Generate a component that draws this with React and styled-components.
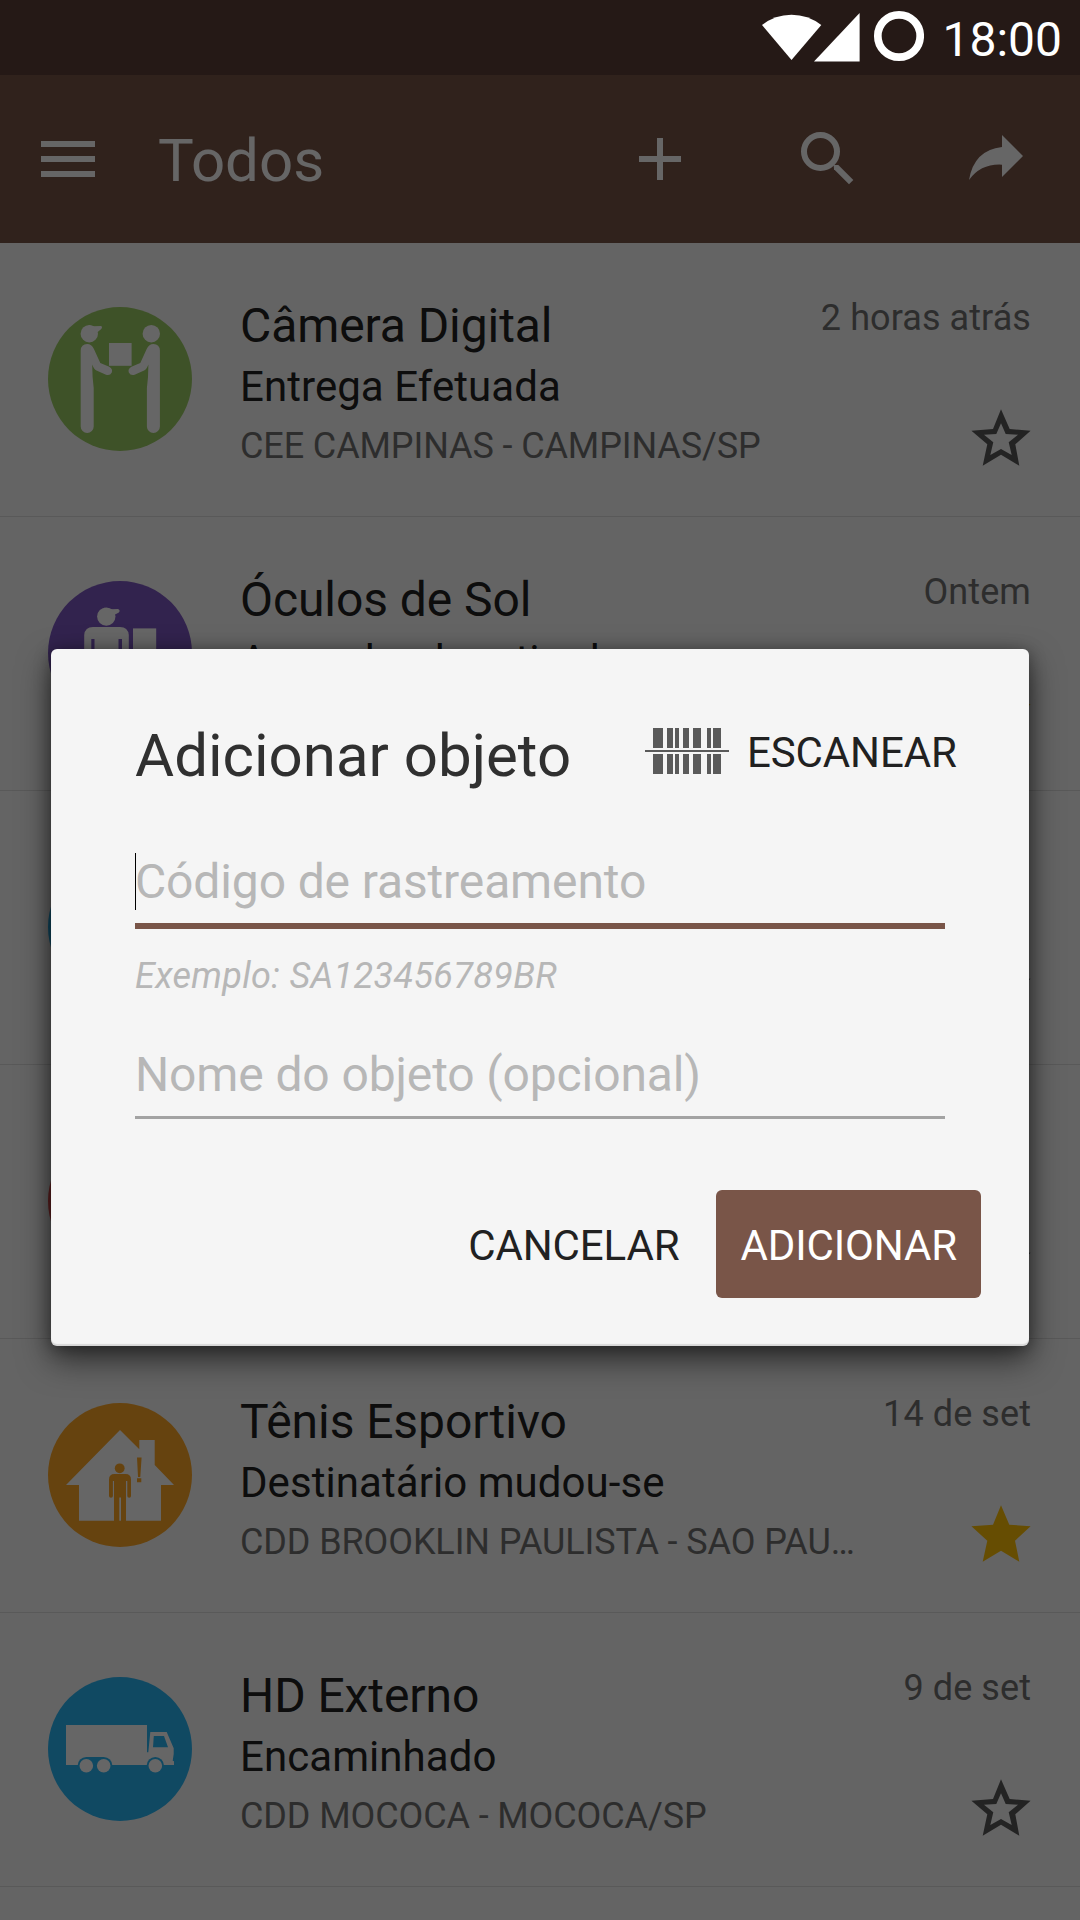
import React from "react";
import styled, { createGlobalStyle } from "styled-components";

const GlobalStyle = createGlobalStyle`
  *, *::before, *::after { box-sizing: border-box; }
  html, body { margin: 0; padding: 0; }
  body { font-family: Roboto, "Noto Sans", sans-serif; background: #fafafa; }
  button, input { font-family: inherit; margin: 0; border: 0; background: none; }
`;

const Screen = styled.div`
  position: relative;
  display: flex;
  flex-direction: column;
  width: 1080px;
  height: 1920px;
  overflow: hidden;
  background: #fafafa;
`;

const StatusBar = styled.header`
  display: flex;
  flex: none;
  justify-content: flex-end;
  height: 75px;
  padding-right: 18px;
  background: #5d4037;
`;

const StatusItems = styled.div`
  position: relative;
  z-index: 2;
  display: flex;
  align-items: flex-start;
  color: #fff;
`;

const StatusGlyph = styled.svg`
  width: 164px;
  height: 75px;
  margin-right: 18px;
`;

const Clock = styled.span`
  padding-top: 11px;
  font-size: 48px;
  line-height: 57px;
`;

const Toolbar = styled.nav`
  display: flex;
  flex: none;
  align-items: center;
  height: 168px;
  padding: 0 48px 0 32px;
  background: #795548;
  color: #fff;
`;

const ToolbarIcon = styled.svg`
  flex: none;
  width: 72px;
  height: 72px;
  margin-left: ${(p) => p.$gap || 0}px;
`;

const ToolbarTitle = styled.h1`
  flex: 1;
  margin: 0 0 0 54px;
  padding-top: 4px;
  font-size: 60px;
  font-weight: 400;
  line-height: 70px;
`;

const List = styled.ul`
  margin: 0;
  padding: 0;
  list-style: none;
`;

const Row = styled.li`
  display: flex;
  height: 274px;
  padding: 0 48px;
  border-bottom: 1px solid #dedede;
`;

const Avatar = styled.svg`
  flex: none;
  width: 144px;
  height: 144px;
  margin: 64px 48px 0 0;
  border-radius: 50%;
  background: ${(p) => p.$color};
  color: #fff;
`;

const Details = styled.div`
  flex: 1;
  min-width: 0;
  padding-top: 55px;
  white-space: nowrap;
  color: #212121;
`;

const ItemName = styled.div`
  font-size: 48px;
  letter-spacing: -0.08px;
  line-height: 56px;
`;

const ItemStatus = styled.div`
  margin-top: 8px;
  font-size: 42px;
  letter-spacing: 0.06px;
  line-height: 50px;
`;

const ItemPlace = styled.div`
  margin-top: 13px;
  font-size: 36px;
  letter-spacing: -0.11px;
  line-height: 42px;
  color: #727272;
`;

const Side = styled.div`
  display: flex;
  flex: none;
  flex-direction: column;
  align-items: flex-end;
  padding-top: 54px;
  font-size: 36px;
  line-height: 42px;
  color: #727272;
`;

const When = styled.span`
  margin-right: 1px;
  letter-spacing: 0.08px;
`;

const Star = styled.svg`
  width: 60px;
  height: 60px;
  margin: 69px 1px 0 0;
`;

const Scrim = styled.div`
  position: absolute;
  inset: 0;
  z-index: 1;
  display: flex;
  align-items: center;
  justify-content: center;
  padding-top: 75px;
  background: rgba(0, 0, 0, 0.6);
`;

const Dialog = styled.section`
  display: flex;
  flex-direction: column;
  width: 978px;
  height: 697px;
  padding: 71px 48px 48px 84px;
  border-radius: 6px;
  background: #f5f5f5;
  box-shadow: 0 14px 32px rgba(0, 0, 0, 0.55), 0 2px 16px rgba(0, 0, 0, 0.35),
    inset 0 -2px 1px rgba(0, 0, 0, 0.12);
  color: #212121;
`;

const DialogHeader = styled.div`
  display: flex;
  height: 70px;
  align-items: center;
`;

const DialogTitle = styled.h2`
  width: 510px;
  margin: 0;
  padding-top: 2px;
  font-size: 60px;
  font-weight: 400;
  line-height: 70px;
  color: #303030;
  white-space: nowrap;
`;

const ScanButton = styled.button`
  display: flex;
  align-items: center;
  margin-bottom: 8px;
  padding: 0;
  font-size: 42px;
  letter-spacing: -0.12px;
  line-height: 50px;
  color: #212121;
`;

const ScanLabel = styled.span`
  padding-top: 4px;
`;

const Barcode = styled.svg`
  width: 84px;
  height: 46px;
  margin-right: 18px;
`;

const Field = styled.div`
  display: flex;
  align-items: center;
  width: 810px;
  height: ${(p) => p.$height}px;
  margin-top: ${(p) => p.$top}px;
  border-bottom: ${(p) => (p.$active ? "6px solid #795548" : "3px solid #a3a3a3")};
`;

const Caret = styled.span`
  width: 1px;
  height: 57px;
  margin-right: -1px;
  background: #000;
`;

const Placeholder = styled.span`
  padding-top: 2px;
  font-size: 48px;
  letter-spacing: -0.13px;
  line-height: 56px;
  color: #b7b7b7;
  white-space: nowrap;
`;

const Hint = styled.div`
  margin-top: 26px;
  font-size: 36px;
  font-style: italic;
  letter-spacing: 0.33px;
  line-height: 42px;
  color: #b7b7b7;
`;

const Actions = styled.div`
  display: flex;
  justify-content: flex-end;
  gap: 13px;
  margin-top: auto;
`;

const Action = styled.button`
  height: 108px;
  padding: 4px 24px 0;
  border-radius: 6px;
  font-size: 42px;
  letter-spacing: -0.12px;
  line-height: 50px;
  color: ${(p) => (p.$primary ? "#fff" : "#212121")};
  background: ${(p) => (p.$primary ? "#795548" : "transparent")};
`;

const PERSON_BODY =
  "M32.7 43.5Q33 37 39.2 37Q43.6 37.2 45.8 41.7L52.3 56L61.2 59.8Q65 62 63.8 65.6Q62 69 58 67.8L48.5 63.5Q46 62.3 44.2 57.5L44.6 70L45.7 81V119.5A6.5 6.5 0 0 1 32.7 119.5Z";

const glyphs = {
  delivered: (
    <g fill="currentColor">
      <circle cx="41.3" cy="26.7" r="8.7" />
      <path d="M40 18 L45.5 19.2 L53 19 Q55 20 53 22.2 L49 25.5Z" />
      <path d={PERSON_BODY} />
      <g transform="translate(144.6 0) scale(-1 1)">
        <circle cx="41.3" cy="26.7" r="8.7" />
        <path d={PERSON_BODY} />
      </g>
      <rect x="61" y="36" width="22.6" height="22.8" />
    </g>
  ),
  pickup: (
    <g fill="currentColor">
      <circle cx="58.3" cy="35.6" r="9.2" />
      <path d="M56 26.4L63 28.2L70 28Q73 29.5 70.5 31.8L66 34Z" />
      <path d="M36.2 60V54Q37 46 45 46H72Q80 46 80.8 54V82H36.2Z" />
      <path d="M43.3 58H46.5V84H43.3ZM70.5 58H74V84H70.5Z" fill="#7e57c2" />
      <rect x="85" y="47.4" width="23.2" height="40" />
    </g>
  ),
  moved: (
    <>
      <path
        fill="currentColor"
        d="M72 27L91.3 46.3V37H106.7V62L126 82H113V117.7H31V82H18Z"
      />
      <g fill="#ffa726">
        <circle cx="71.7" cy="65.3" r="4.9" />
        <path d="M61 76.5Q61 71 66.5 71H77.5Q83 71 83 76.5V93Q83 94.7 81.2 94.7Q79.3 94.7 79.3 93V78H78V118H73V94.5H71.3V118H66V78H64.9V93Q64.9 94.7 63 94.7Q61 94.7 61 93Z" />
        <path d="M89 54.5H93.6L92.3 74H90ZM89 75.2H93.3V79.2H89Z" />
      </g>
    </>
  ),
  truck: (
    <>
      <path
        fill="currentColor"
        d="M18 48H99V75.3H100.3L102.3 55H118.7L125.7 71.3V77L124.7 83.7L126 84.3V88H18Z"
      />
      <path d="M105.8 59H116L120 70.3H105Z" fill="#29b6f6" />
      <g fill="#29b6f6">
        <path d="M38.3 80H55.7V88.7H38.3Z" />
        <circle cx="38.3" cy="88.7" r="8.7" />
        <circle cx="55.7" cy="88.7" r="8.7" />
        <circle cx="107.3" cy="88.7" r="8.7" />
      </g>
      <g fill="currentColor">
        <circle cx="38.3" cy="88.7" r="6.8" />
        <circle cx="55.7" cy="88.7" r="6.8" />
        <circle cx="107.3" cy="88.7" r="6.8" />
      </g>
    </>
  ),
};

const STAR_FULL =
  "M30 1.3L38.3 20.7L59.6 22.3L44 36.7L48.3 57.7L30 46.7L11.7 57.7L16.3 36.7L.4 22.3L22 20.7Z";
const STAR_LINE =
  "M30 1.3L38.7 21L59.6 22.7L44.3 36.3L48.3 57.7L30 46.7L11.7 57.7L16.3 36.3L.4 22.7L22 21ZM30 15.3L25.3 26L13 26.7L22.3 34.3L19.3 47L30 41L40.7 47L37.7 34.3L47 26.7L34.7 26Z";

const items = [
  { name: "Câmera Digital", status: "Entrega Efetuada", place: "CEE CAMPINAS - CAMPINAS/SP", date: "2 horas atrás", glyph: "delivered", color: "#9ccc65" },
  { name: "Óculos de Sol", status: "Aguardando retirada", date: "Ontem", glyph: "pickup", color: "#7e57c2", starred: true },
  { glyph: "truck", color: "#29b6f6" },
  { color: "#ef5350" },
  { name: "Tênis Esportivo", status: "Destinatário mudou-se", place: "CDD BROOKLIN PAULISTA - SAO PAU…", date: "14 de set", glyph: "moved", color: "#ffa726", starred: true },
  { name: "HD Externo", status: "Encaminhado", place: "CDD MOCOCA - MOCOCA/SP", date: "9 de set", glyph: "truck", color: "#29b6f6" },
];

const BARS = [[8, 10], [22, 6], [30, 4], [38, 6], [48, 8], [62, 4], [68, 8]];

function ListItem({ item }) {
  return (
    <Row>
      <Avatar viewBox="0 0 144 144" $color={item.color}>{glyphs[item.glyph]}</Avatar>
      <Details>
        <ItemName>{item.name || "\u00a0"}</ItemName>
        <ItemStatus>{item.status || "\u00a0"}</ItemStatus>
        <ItemPlace>{item.place}</ItemPlace>
      </Details>
      <Side>
        <When>{item.date || "\u00a0"}</When>
        <Star viewBox="0 0 60 60">
          <path d={item.starred ? STAR_FULL : STAR_LINE} fill={item.starred ? "#ffc107" : "#585858"} fillRule="evenodd" />
        </Star>
      </Side>
    </Row>
  );
}

export default function App() {
  return (
    <Screen>
      <GlobalStyle />
      <StatusBar>
        <StatusItems>
          <StatusGlyph viewBox="760 0 164 75" fill="currentColor">
            <path d="M762 25Q775 14.7 791.5 14.7Q808 14.7 821.3 25L791.5 60Z" />
            <path d="M859.6 13V61.5H814Z" />
            <circle cx="899" cy="36" r="21.2" fill="none" stroke="currentColor" strokeWidth="7.7" />
          </StatusGlyph>
          <Clock>18:00</Clock>
        </StatusItems>
      </StatusBar>
      <Toolbar>
        <ToolbarIcon viewBox="32 123 72 72" fill="currentColor">
          <path d="M41 141H95V147H41ZM41 156H95V162H41ZM41 171H95V177H41Z" />
        </ToolbarIcon>
        <ToolbarTitle>Todos</ToolbarTitle>
        <ToolbarIcon viewBox="0 0 72 72" fill="currentColor">
          <path d="M33 15H39V33H57V39H39V57H33V39H15V33H33Z" />
        </ToolbarIcon>
        <ToolbarIcon $gap={96} viewBox="792 123 72 72">
          <circle cx="820.5" cy="151.5" r="16.5" fill="none" stroke="currentColor" strokeWidth="6" />
          <path d="M833.7 165H838.3L853.3 180L849 184.3L834 169.3Z" fill="currentColor" />
        </ToolbarIcon>
        <ToolbarIcon $gap={96} viewBox="960 123 72 72" fill="currentColor">
          <path d="M1002 135L1023 156L1002 177V164.7Q981 163.5 969 180Q974 150 1002 147Z" />
        </ToolbarIcon>
      </Toolbar>
      <List>
        {items.map((item, i) => <ListItem key={i} item={item} />)}
      </List>
      <Scrim>
        <Dialog role="dialog">
          <DialogHeader>
            <DialogTitle>Adicionar objeto</DialogTitle>
            <ScanButton>
              <Barcode viewBox="0 0 84 46" fill="#5a5a5a">
                {BARS.map(([x, w]) => (
                  <path key={x} d={`M${x} 0h${w}v20h${-w}ZM${x} 26h${w}v20h${-w}Z`} />
                ))}
                <path d="M0 22H84V24H0Z" />
              </Barcode>
              <ScanLabel>ESCANEAR</ScanLabel>
            </ScanButton>
          </DialogHeader>
          <Field $active $height={90} $top={49}>
            <Caret />
            <Placeholder>Código de rastreamento</Placeholder>
          </Field>
          <Hint>Exemplo: SA123456789BR</Hint>
          <Field $height={88} $top={34}>
            <Placeholder>Nome do objeto (opcional)</Placeholder>
          </Field>
          <Actions>
            <Action>CANCELAR</Action>
            <Action $primary>ADICIONAR</Action>
          </Actions>
        </Dialog>
      </Scrim>
    </Screen>
  );
}
